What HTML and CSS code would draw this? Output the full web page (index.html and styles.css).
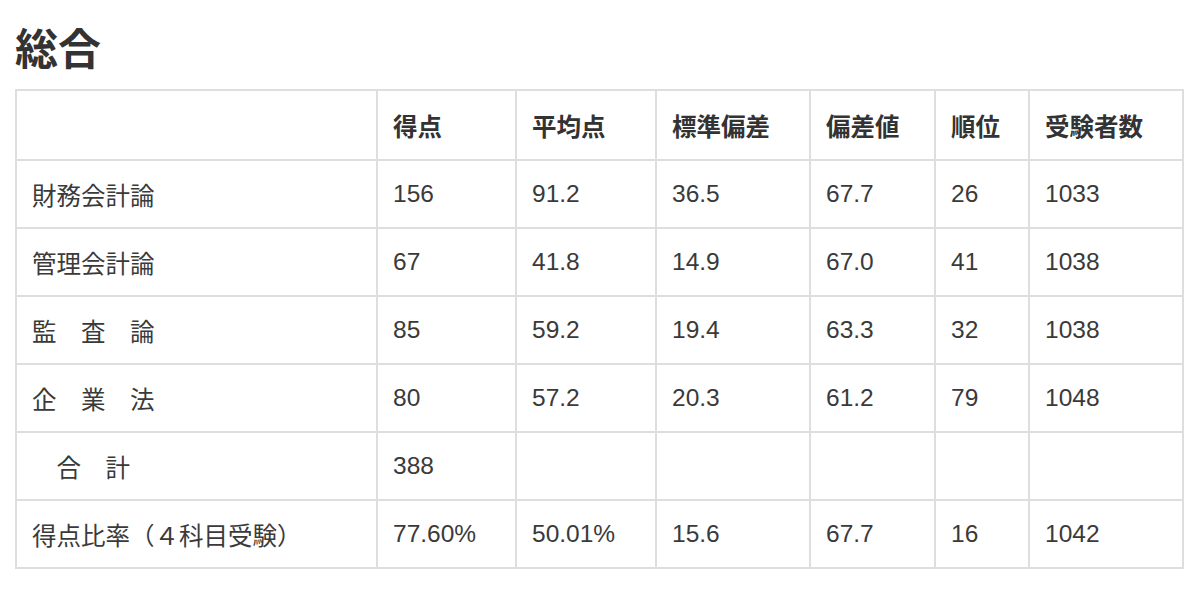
FILE: index.html
```html
<!DOCTYPE html>
<html lang="ja">
<head>
<meta charset="utf-8">
<title>総合</title>
<link rel="stylesheet" href="styles.css">
</head>
<body>
<div class="page">
  <h1 class="title">総合</h1>
  <table class="score-table">
    <colgroup>
      <col class="c-name">
      <col class="c-score">
      <col class="c-avg">
      <col class="c-sd">
      <col class="c-dev">
      <col class="c-rank">
      <col class="c-count">
    </colgroup>
    <thead>
      <tr class="head-row">
        <th></th>
        <th>得点</th>
        <th>平均点</th>
        <th>標準偏差</th>
        <th>偏差値</th>
        <th>順位</th>
        <th>受験者数</th>
      </tr>
    </thead>
    <tbody>
      <tr><td>財務会計論</td><td>156</td><td>91.2</td><td>36.5</td><td>67.7</td><td>26</td><td>1033</td></tr>
      <tr><td>管理会計論</td><td>67</td><td>41.8</td><td>14.9</td><td>67.0</td><td>41</td><td>1038</td></tr>
      <tr><td>監　査　論</td><td>85</td><td>59.2</td><td>19.4</td><td>63.3</td><td>32</td><td>1038</td></tr>
      <tr><td>企　業　法</td><td>80</td><td>57.2</td><td>20.3</td><td>61.2</td><td>79</td><td>1048</td></tr>
      <tr><td>　合　計</td><td>388</td><td></td><td></td><td></td><td></td><td></td></tr>
      <tr><td>得点比率（４科目受験）</td><td>77.60%</td><td>50.01%</td><td>15.6</td><td>67.7</td><td>16</td><td>1042</td></tr>
    </tbody>
  </table>
</div>
</body>
</html>
```

FILE: styles.css
```css
html, body {
  margin: 0;
  padding: 0;
  background: #ffffff;
}

body {
  font-family: "Liberation Sans", "Noto Sans CJK JP", sans-serif;
  color: #3a3a3a;
}

.page {
  padding: 21px 0 0 15px;
}

.title {
  margin: 0 0 18px 0;
  font-family: "Noto Sans CJK JP", sans-serif;
  font-size: 43px;
  line-height: 50px;
  font-weight: 700;
  color: #333333;
}

.score-table {
  border-collapse: collapse;
  table-layout: fixed;
  width: 1169px;
}

.c-name { width: 361px; }
.c-score { width: 139px; }
.c-avg { width: 140px; }
.c-sd { width: 154px; }
.c-dev { width: 125px; }
.c-rank { width: 94px; }
.c-count { width: 154px; }

.score-table th,
.score-table td {
  border: 2px solid #dedede;
  padding: 0 15px;
  text-align: left;
  font-size: 24.5px;
  white-space: nowrap;
  vertical-align: middle;
}

.score-table th {
  font-weight: 700;
  color: #333333;
}

.head-row {
  height: 70px;
}

.score-table tbody tr {
  height: 68px;
}
```
